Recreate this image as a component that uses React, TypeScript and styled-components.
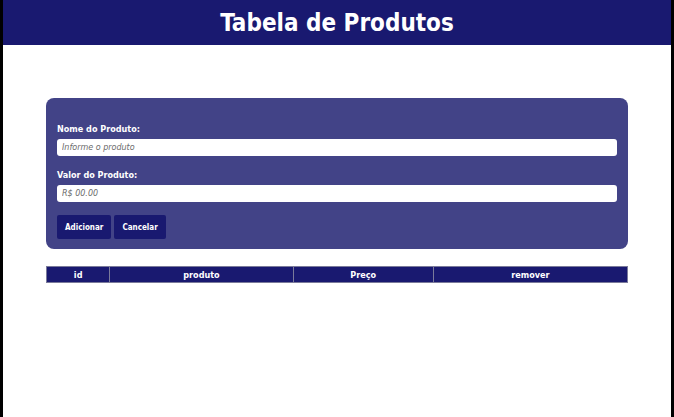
import React from 'react';
import styled, { createGlobalStyle } from 'styled-components';

const GlobalStyle = createGlobalStyle`
  html, body {
    margin: 0;
    padding: 0;
    height: 100%;
    background: #000;
  }
  #root {
    height: 100%;
  }
`;

const Page = styled.div`
  box-sizing: border-box;
  height: 100%;
  margin: 0 3px;
  background: #fff;
  font-family: 'DejaVu Sans Condensed', 'DejaVu Sans', Verdana, sans-serif;
`;

const Header = styled.header`
  height: 45px;
  background: #191970;
  display: flex;
  align-items: center;
  justify-content: center;
`;

const Title = styled.h1`
  margin: 0;
  color: #fff;
  font-size: 24px;
  font-weight: bold;
`;

const Main = styled.main`
  width: 582px;
  margin: 53px auto 0;
`;

const FormCard = styled.form`
  background: #424387;
  border-radius: 8px;
  padding: 26px 11px 10px;
  display: flex;
  flex-direction: column;
`;

const Label = styled.label`
  color: #fff;
  font-size: 9px;
  line-height: 10px;
  font-weight: bold;
  margin-bottom: 5px;
`;

const Input = styled.input<{ $gap: number }>`
  box-sizing: border-box;
  height: 17px;
  border: none;
  border-radius: 3px;
  padding: 0 5px;
  font-family: 'DejaVu Sans', sans-serif;
  font-size: 8px;
  font-style: italic;
  margin: 0 0 ${(p) => p.$gap}px;
  &::placeholder {
    color: #6b6b6b;
  }
`;

const Actions = styled.div`
  display: flex;
  gap: 3px;
`;

const Button = styled.button`
  height: 24px;
  padding: 0 8px;
  border: none;
  border-radius: 2px;
  background: #191970;
  color: #fff;
  font-family: 'DejaVu Sans Condensed', 'DejaVu Sans', sans-serif;
  font-size: 8px;
  font-weight: bold;
`;

const Table = styled.table`
  width: 100%;
  margin-top: 17px;
  border-collapse: collapse;
  table-layout: fixed;
`;

const Th = styled.th<{ $w: number }>`
  width: ${(p) => p.$w}%;
  height: 15px;
  padding: 0;
  background: #191970;
  color: #fff;
  font-size: 9px;
  font-weight: bold;
  border: 1px solid #7a7a9a;
`;

const columns = [
  { key: 'id', label: 'id', w: 10.8 },
  { key: 'produto', label: 'produto', w: 31.6 },
  { key: 'preco', label: 'Preço', w: 24.1 },
  { key: 'remover', label: 'remover', w: 33.5 },
];

export default function App() {
  return (
    <>
      <GlobalStyle />
      <Page>
        <Header>
          <Title>Tabela de Produtos</Title>
        </Header>
        <Main>
          <FormCard onSubmit={(e) => e.preventDefault()}>
            <Label htmlFor="nome">Nome do Produto:</Label>
            <Input id="nome" placeholder="Informe o produto" $gap={14} />
            <Label htmlFor="valor">Valor do Produto:</Label>
            <Input id="valor" placeholder="R$ 00.00" $gap={13} />
            <Actions>
              <Button type="submit">Adicionar</Button>
              <Button type="button">Cancelar</Button>
            </Actions>
          </FormCard>
          <Table>
            <thead>
              <tr>
                {columns.map((c) => (
                  <Th key={c.key} $w={c.w}>
                    {c.label}
                  </Th>
                ))}
              </tr>
            </thead>
            <tbody />
          </Table>
        </Main>
      </Page>
    </>
  );
}
